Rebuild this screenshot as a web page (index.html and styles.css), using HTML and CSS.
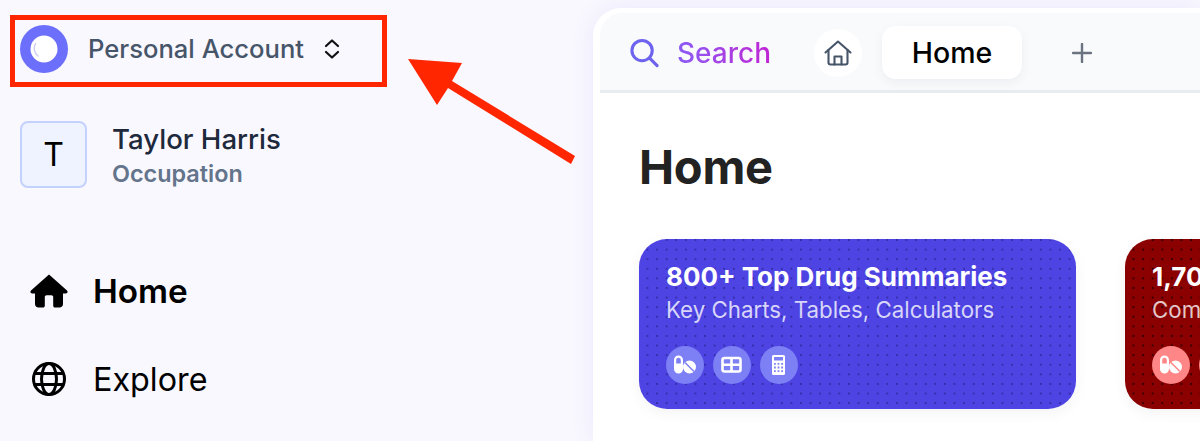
FILE: index.html
```html
<!DOCTYPE html>
<html lang="en">
<head>
<meta charset="utf-8">
<title>Home</title>
<link rel="stylesheet" href="styles.css">
</head>
<body>
<div class="app">
  <aside class="sidebar">
    <div class="account">
      <svg class="logo" viewBox="0 0 48 48" fill="none"><circle cx="24" cy="24" r="24" fill="#6c6ffb"/><circle cx="24" cy="24" r="13.500" fill="#fff"/><path d="M15.500 18.500c-2 4-1.500 9 2.500 12.500" stroke="#c9c9f2" stroke-width="1.300" stroke-linecap="round"/></svg>
      <span class="account-name">Personal Account</span>
      <svg class="chevrons" viewBox="0 0 18 22" fill="none" stroke="#111" stroke-width="2.200" stroke-linecap="round" stroke-linejoin="round"><path d="M3 8l6-5.500 6 5.500"/><path d="M3 14l6 5.500 6-5.500"/></svg>
    </div>
    <div class="user">
      <div class="user-avatar">T</div>
      <div class="user-text">
        <div class="user-name">Taylor Harris</div>
        <div class="user-role">Occupation</div>
      </div>
    </div>
    <nav class="nav">
      <a class="nav-item active">
        <svg class="nav-icon" viewBox="0 0 38 34" fill="#000"><path d="M19 0.500 37 16.500c1.200 1.200.4 3-1.200 3H33V30c0 2-1.500 3.500-3.500 3.500H25c-1 0-1.800-.8-1.800-1.800V23c0-1-.8-1.800-1.800-1.800h-4.800c-1 0-1.800.8-1.800 1.800v8.700c0 1-.8 1.800-1.800 1.800H8.500C6.500 33.500 5 32 5 30V19.500H2.200c-1.600 0-2.400-1.800-1.200-3z"/></svg>
        <span>Home</span>
      </a>
      <a class="nav-item">
        <svg class="nav-icon" viewBox="0 0 38 38" fill="none" stroke="#000" stroke-width="3"><circle cx="19" cy="19" r="15.500"/><ellipse cx="19" cy="19" rx="7.500" ry="15.500"/><path d="M5 13.500h28M5 24.500h28"/></svg>
        <span>Explore</span>
      </a>
    </nav>
  </aside>
  <main class="panel">
    <header class="tabs">
      <div class="search">
        <svg class="search-icon" viewBox="0 0 30 30" fill="none" stroke="#6d63ee" stroke-width="3.200" stroke-linecap="round"><circle cx="12.500" cy="12.500" r="10.500"/><path d="M20.500 20.500 28 28"/></svg>
        <span class="search-text">Search</span>
      </div>
      <span class="home-button">
        <svg viewBox="0 0 28 26" fill="none" stroke="#475569" stroke-width="2.100" stroke-linecap="round" stroke-linejoin="round"><path d="M1.500 12.500 14 1.500l12.500 11"/><path d="M4.500 10v12.500c0 1.200.8 2 2 2h15c1.200 0 2-.8 2-2V10"/><path d="M10.500 24.500v-8h7v8"/></svg>
      </span>
      <span class="tab">Home</span>
      <svg class="plus" viewBox="0 0 20 20" fill="none" stroke="#6b7280" stroke-width="2.400" stroke-linecap="round"><path d="M10 1v18M1 10h18"/></svg>
    </header>
    <section class="content">
      <h1 class="title">Home</h1>
      <div class="cards">
        <article class="card card-blue">
          <h2 class="card-title">800+ Top Drug Summaries</h2>
          <p class="card-sub">Key Charts, Tables, Calculators</p>
          <div class="card-icons">
            <span class="badge"><svg viewBox="0 0 24 24" fill="#fff"><path fill-rule="evenodd" d="M5.500 2.500a4.500 4.500 0 0 1 4.500 4.500v9a4.500 4.500 0 0 1-9 0V7a4.500 4.500 0 0 1 4.500-4.500zM3.200 10.500h4.600V7a2.300 2.300 0 0 0-4.600 0z"/><circle cx="16.500" cy="14" r="6.500"/><path d="M12 9.500l9 9" stroke="#7d80f5" stroke-width="1.500"/></svg></span>
            <span class="badge"><svg viewBox="0 0 24 24" fill="none" stroke="#fff" stroke-width="2.600" stroke-linejoin="round"><rect x="2.500" y="5" width="18" height="13.500" rx="2"/><path d="M2.500 11.750h18M11.500 5v13.500"/></svg></span>
            <span class="badge"><svg viewBox="0 0 24 24" fill="#fff"><path fill-rule="evenodd" d="M6.500 2h10A1.500 1.500 0 0 1 18 3.500v17a1.500 1.500 0 0 1-1.500 1.500h-10A1.500 1.500 0 0 1 5 20.500v-17A1.500 1.500 0 0 1 6.500 2zM7 4v3.500h9V4zM7 10v1.800h1.800V10zM10.600 10v1.800h1.800V10zM14.200 10v1.800H16V10zM7 13.600v1.800h1.800v-1.800zM10.600 13.600v1.800h1.800v-1.800zM14.200 13.600v1.800H16v-1.800zM7 17.200V19h1.800v-1.800zM10.600 17.200V19h1.800v-1.800zM14.200 17.200V19H16v-1.800z"/></svg></span>
          </div>
        </article>
        <article class="card card-red">
          <h2 class="card-title">1,70</h2>
          <p class="card-sub">Com</p>
          <div class="card-icons">
            <span class="badge"><svg viewBox="0 0 24 24" fill="#fff"><path fill-rule="evenodd" d="M5.500 2.500a4.500 4.500 0 0 1 4.500 4.500v9a4.500 4.500 0 0 1-9 0V7a4.500 4.500 0 0 1 4.500-4.500zM3.200 10.500h4.600V7a2.300 2.300 0 0 0-4.600 0z"/><circle cx="16.500" cy="14" r="6.500"/><path d="M12 9.500l9 9" stroke="#ff8686" stroke-width="1.500"/></svg></span>
            <span class="badge"></span>
          </div>
        </article>
      </div>
    </section>
  </main>
</div>
<div class="callout-box"></div>
<svg class="callout-arrow" viewBox="0 0 180 115" fill="#ff2600"><path d="M4 5 58 9 48 27 171 102 167 110 44 34 33 51z"/></svg>
</body>
</html>
```

FILE: styles.css
```css
* { box-sizing: border-box; }
html, body { margin: 0; height: 441px; overflow: hidden; }
body { background: #f9f8ff; font-family: Inter, "Liberation Sans", sans-serif; position: relative; }

.app { display: flex; height: 441px; }

.sidebar { width: 593px; flex: none; padding: 25px 20px 0; }
.account { display: flex; align-items: center; height: 48px; }
.logo { width: 48px; height: 48px; flex: none; }
.account-name { margin-left: 20px; font-size: 25.600px; font-weight: 500; color: #475569; line-height: 1; }
.chevrons { width: 18px; height: 22px; margin-left: 19px; }

.user { display: flex; align-items: flex-start; height: 67px; margin-top: 48px; }
.user-avatar { width: 67px; height: 67px; border: 2px solid #c3d1fd; border-radius: 8px; background: #eef3ff; display: flex; align-items: center; justify-content: center; font-size: 32px; color: #000; }
.user-text { margin-left: 25px; }
.user-name { font-size: 27.600px; font-weight: 500; color: #1e293b; line-height: 37px; }
.user-role { margin-top: 1px; font-size: 23.400px; font-weight: 600; color: #64748b; line-height: 30px; }

.nav { display: flex; flex-direction: column; gap: 44px; margin-top: 81px; padding-left: 10px; }
.nav-item { display: flex; align-items: center; height: 44px; font-size: 32.300px; color: #000; }
.nav-item.active { font-weight: 600; font-size: 33.300px; }
.nav-icon { width: 38px; height: 38px; flex: none; margin-right: 25px; }

.panel { flex: 1; min-width: 0; height: 433px; margin-top: 8px; border-style: solid; border-color: #fff; border-width: 5px 0 0 7px; border-radius: 28px 0 0 0; background: #fff; box-shadow: 0 0 24px rgba(90, 70, 200, .09); overflow: hidden; }
.tabs { display: flex; align-items: center; height: 80px; background: #f8fafc; border-bottom: 3px solid #e8ecf0; padding: 2px 0 0 30px; }
.search { display: flex; align-items: center; }
.search-icon { width: 29px; height: 30px; }
.search-text { margin-left: 18px; font-size: 28px; font-weight: 500; line-height: 1; background: linear-gradient(90deg, #8b5cf6, #c026d3); -webkit-background-clip: text; background-clip: text; color: transparent; }
.home-button { width: 48px; height: 48px; margin-left: 43px; border-radius: 50%; background: #fff; display: flex; align-items: center; justify-content: center; }
.home-button svg { width: 28px; height: 26px; }
.tab { width: 140px; height: 53px; margin-left: 20px; border-radius: 14px; background: #fff; box-shadow: 0 4px 12px rgba(15, 23, 42, .05); display: flex; align-items: center; justify-content: center; font-size: 28.500px; font-weight: 500; color: #000; }
.plus { width: 20px; height: 20px; margin-left: 50px; }

.content { padding: 44px 0 0 39px; }
.title { margin: 0; font-size: 47px; font-weight: 700; line-height: 60px; color: #222; letter-spacing: -.25px; }
.cards { display: flex; gap: 49px; margin-top: 42px; width: 1000px; }
.card { width: 437px; height: 170px; flex: none; border-radius: 28px; padding: 23px 27px; color: #fff; box-shadow: 0 4px 14px rgba(15, 23, 42, .05); background-size: 9.600px 9.600px; background-position: 3.700px -3.800px; }
.card-blue { background-color: #4e44e4; background-image: radial-gradient(circle, rgba(20, 15, 90, .42) 1px, transparent 1.500px); }
.card-red { background-color: #8b0000; background-image: radial-gradient(circle, rgba(0, 0, 0, .6) 1px, transparent 1.500px); }
.card-title { margin: 0; font-size: 26px; font-weight: 700; line-height: 30px; white-space: nowrap; }
.card-sub { margin: 3px 0 0; font-size: 22.300px; font-weight: 400; line-height: 30px; color: rgba(255, 255, 255, .78); white-space: nowrap; }
.card-icons { display: flex; gap: 9px; margin-top: 21px; }
.badge { width: 38px; height: 38px; border-radius: 50%; display: flex; align-items: center; justify-content: center; }
.card-blue .badge { background: #7d80f5; }
.card-red .badge { background: #ff8686; }
.badge svg { width: 24px; height: 24px; }

.callout-box { position: absolute; left: 10px; top: 15px; width: 377px; height: 72px; border: 5px solid #ff2600; }
.callout-arrow { position: absolute; left: 404px; top: 54px; width: 180px; height: 115px; }
```
